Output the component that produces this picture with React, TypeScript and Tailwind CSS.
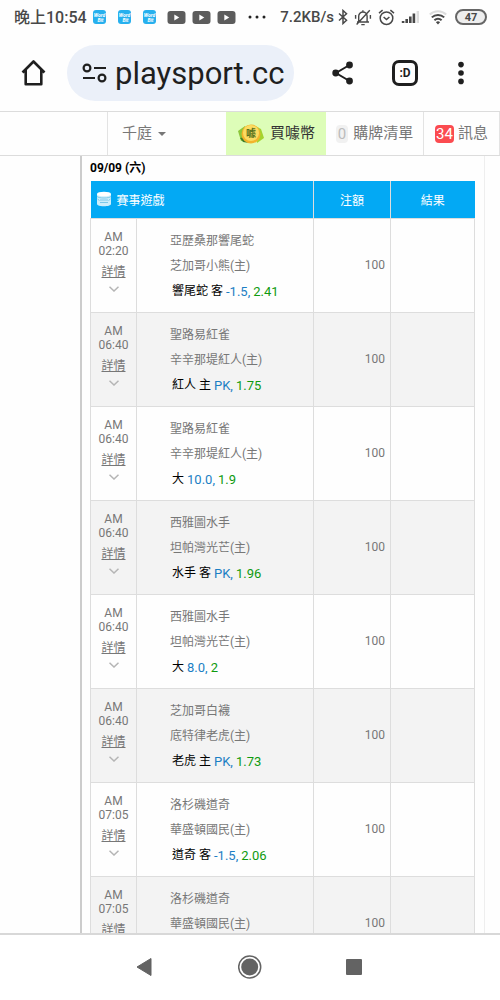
import React from 'react';

type TBet = {
  time: string;
  away: string;
  home: string;
  pick: string;
  line: string;
  odds: string;
  stake: number;
};

const bets: TBet[] = [
  { time: '02:20', away: '亞歷桑那響尾蛇', home: '芝加哥小熊(主)', pick: '響尾蛇 客', line: '-1.5', odds: '2.41', stake: 100 },
  { time: '06:40', away: '聖路易紅雀', home: '辛辛那堤紅人(主)', pick: '紅人 主', line: 'PK', odds: '1.75', stake: 100 },
  { time: '06:40', away: '聖路易紅雀', home: '辛辛那堤紅人(主)', pick: '大', line: '10.0', odds: '1.9', stake: 100 },
  { time: '06:40', away: '西雅圖水手', home: '坦帕灣光芒(主)', pick: '水手 客', line: 'PK', odds: '1.96', stake: 100 },
  { time: '06:40', away: '西雅圖水手', home: '坦帕灣光芒(主)', pick: '大', line: '8.0', odds: '2', stake: 100 },
  { time: '06:40', away: '芝加哥白襪', home: '底特律老虎(主)', pick: '老虎 主', line: 'PK', odds: '1.73', stake: 100 },
  { time: '07:05', away: '洛杉磯道奇', home: '華盛頓國民(主)', pick: '道奇 客', line: '-1.5', odds: '2.06', stake: 100 },
  { time: '07:05', away: '洛杉磯道奇', home: '華盛頓國民(主)', pick: '道奇 客', line: '-1.5', odds: '2.06', stake: 100 },
];

const WordBitIcon: React.FC = () => (
  <svg width="13" height="14" viewBox="0 0 13 14" aria-hidden="true">
    <rect width="13" height="14" rx="3" fill="#27b0ee" />
    <text x="6.5" y="6.5" textAnchor="middle" fontSize="5" fontWeight="700" fontStyle="italic" fill="#fff">
      Word
    </text>
    <text x="7.5" y="11.5" textAnchor="middle" fontSize="5" fontWeight="700" fontStyle="italic" fill="#fff">
      Bit
    </text>
  </svg>
);

const VideoIcon: React.FC = () => (
  <svg width="19" height="13" viewBox="0 0 19 13" aria-hidden="true">
    <rect x="0.5" width="18" height="13" rx="3" fill="#5c5c5c" />
    <path d="M7.3 3.6v5.8l5-2.9z" fill="#fff" />
  </svg>
);

const StatusIcons: React.FC = () => (
  <>
    <svg width="10" height="16" viewBox="0 0 10 16" fill="none" stroke="#484848" strokeWidth="1.5" aria-hidden="true">
      <path d="M1 4.5l7.5 6.8L5 14.5v-13l3.5 3.2L1 11.5" />
    </svg>
    <svg className="ml-[6px]" width="18" height="17" viewBox="0 0 18 17" fill="none" stroke="#484848" strokeWidth="1.4" aria-hidden="true">
      <path d="M3 13h12M4.7 12.5V7.2a4.2 4.2 0 0 1 8.4 0v5.3M7.3 15.6h3.4M8.9 3V1.2M15.8 1.2L2.6 15.4M1.6 6v3.8M16.4 6v3.8" />
    </svg>
    <svg className="ml-[6px]" width="17" height="17" viewBox="0 0 17 17" fill="none" stroke="#484848" strokeWidth="1.5" aria-hidden="true">
      <circle cx="8.5" cy="9.2" r="6.3" />
      <path d="M5.6 8l2.9 2.6L11.4 8M1 4.2l3.6-3M16 4.2l-3.6-3" />
    </svg>
    <svg className="ml-[6px]" width="19" height="14" viewBox="0 0 19 14" aria-hidden="true">
      <path d="M0.8 11h2.6v2H0.8zM4.4 9H7v4H4.4zM8 6.6h2.6V13H8zM11.6 3.6h2.6V13h-2.6z" fill="#484848" />
      <path d="M15.6 1H18v12h-2.4z" fill="#ddd" />
    </svg>
    <svg className="ml-[9px]" width="18" height="15" viewBox="0 0 18 15" fill="none" strokeWidth="2" aria-hidden="true">
      <path d="M0.8 4.6a12 12 0 0 1 16.4 0" stroke="#ddd" />
      <path d="M2.8 7.4a9 9 0 0 1 12.4 0M5.4 10.2a5.4 5.4 0 0 1 7.2 0" stroke="#484848" />
      <path d="M6.9 12.2a3.2 3.2 0 0 1 4.2 0L9 14.6z" fill="#484848" />
    </svg>
  </>
);

const StatusBar: React.FC = () => (
  <div className="flex h-[34px] shrink-0 items-center pr-[13px] pl-[14px] text-[#484848]">
    <span className="pt-[2px] text-base font-medium whitespace-nowrap">晚上10:54</span>
    <div className="ml-[6px] flex gap-3">
      <WordBitIcon />
      <WordBitIcon />
      <WordBitIcon />
    </div>
    <div className="ml-[11px] flex gap-[6px]">
      <VideoIcon />
      <VideoIcon />
      <VideoIcon />
    </div>
    <svg className="ml-3" width="20" height="4" viewBox="0 0 20 4" fill="#222" aria-hidden="true">
      <circle cx="2" cy="2" r="1.5" />
      <circle cx="9" cy="2" r="1.5" />
      <circle cx="16" cy="2" r="1.5" />
    </svg>
    <div className="ml-auto flex items-center">
      <span className="mr-1 text-[15px] font-medium">7.2KB/s</span>
      <StatusIcons />
      <span className="ml-2 flex h-4 w-8 items-center justify-center rounded-full border-2 border-[#666] bg-[#eee] pt-px text-[11px] leading-none font-bold">
        47
      </span>
    </div>
  </div>
);

const BrowserBar: React.FC = () => (
  <header className="flex h-[77px] shrink-0 items-center pr-[13px] pl-[21px]">
    <button type="button" aria-label="首頁">
      <svg width="26" height="28" viewBox="0 0 26 28" fill="none" stroke="#1f1f1f" strokeWidth="2.6" aria-hidden="true">
        <path d="M1.5 13.5L12.5 2.5l11 11M4.7 11v14.2h15.6V11" strokeLinejoin="round" />
      </svg>
    </button>
    <div className="mr-[17px] ml-5 flex h-14 min-w-0 flex-1 items-center rounded-full bg-[#ebf0f9] pr-2 pl-[14px]">
      <svg className="shrink-0" width="28" height="24" viewBox="0 0 28 24" fill="none" stroke="#1f1f1f" strokeWidth="2.2" aria-hidden="true">
        <circle cx="6" cy="7" r="3.4" />
        <circle cx="21" cy="17" r="3.4" />
        <path d="M13 7h12M2 17h12" />
      </svg>
      <input
        className="ml-[6px] w-full min-w-0 bg-transparent pt-[3px] text-[31px] leading-10 text-[#1f1f1f] outline-none"
        aria-label="網址"
        defaultValue="playsport.cc"
      />
    </div>
    <button type="button" aria-label="分享" className="flex w-16 justify-center">
      <svg width="24" height="26" viewBox="0 0 24 26" fill="#1f1f1f" aria-hidden="true">
        <path d="M18.5 5L5 13l13.5 8" fill="none" stroke="#1f1f1f" strokeWidth="2" />
        <circle cx="18.5" cy="5" r="3.4" />
        <circle cx="4.7" cy="13" r="3.4" />
        <circle cx="18.5" cy="21" r="3.4" />
      </svg>
    </button>
    <button type="button" aria-label="分頁" className="flex w-[60px] justify-center">
      <span className="flex h-[26px] w-[26px] items-center justify-center rounded-[7px] border-[3px] border-[#1f1f1f] text-xs leading-none font-bold text-[#1f1f1f]">
        :D
      </span>
    </button>
    <button type="button" aria-label="更多" className="flex w-[52px] justify-center">
      <svg width="8" height="24" viewBox="0 0 8 24" fill="#1f1f1f" aria-hidden="true">
        <circle cx="4" cy="3.6" r="2.8" />
        <circle cx="4" cy="12" r="2.8" />
        <circle cx="4" cy="20.4" r="2.8" />
      </svg>
    </button>
  </header>
);

const CoinIcon: React.FC = () => (
  <svg width="28" height="22" viewBox="0 0 28 22" aria-hidden="true">
    <path d="M1 8l7-5 3 14-7 1z" fill="#8cc63a" />
    <path d="M18 3l6 3 3 9-7 5z" fill="#a4d42f" />
    <path d="M3 15l6-1 3 6-6-1z" fill="#3f7d2a" />
    <ellipse cx="14" cy="11" rx="9.5" ry="9.5" fill="#f2b42c" />
    <ellipse cx="14" cy="10" rx="8" ry="8" fill="#fbdc62" />
    <text x="14" y="14" textAnchor="middle" fontSize="10" fontWeight="700" fill="#55701c">
      噱
    </text>
  </svg>
);

const SiteNav: React.FC = () => (
  <nav className="flex h-[45px] shrink-0 justify-end border-y border-[#dcdcdc] text-[15px] text-[#777]">
    <button type="button" className="flex w-[119px] items-center border-l border-[#e3e3e3] pl-[14px]">
      千庭
      <span className="ml-[6px] border-x-4 border-t-4 border-x-transparent border-t-[#777]" />
    </button>
    <a href="#coins" className="flex w-[100px] items-center justify-center gap-[5px] bg-[#ddfdb8] text-[#333]">
      <CoinIcon />
      買噱幣
    </a>
    <a href="#orders" className="flex w-[97px] items-center justify-center gap-[5px]">
      <span className="rounded-sm bg-[#f1f1f1] px-[2px] leading-[18px] text-[#bbb]">0</span>
      購牌清單
    </a>
    <a href="#messages" className="flex w-[77px] items-center justify-center gap-1 border-x border-[#e3e3e3]">
      <span className="rounded-sm bg-[#fb4b50] px-[1px] leading-[18px] text-white">34</span>
      訊息
    </a>
  </nav>
);

const BetRow: React.FC<{ bet: TBet }> = ({ bet }) => (
  <tr className="h-[94px] even:bg-[#f3f3f3]">
    <td className="border border-[#ddd] pb-2 text-center leading-[14px]">
      AM
      <br />
      {bet.time}
      <a href="#detail" className="mt-[5px] block leading-[18px] underline">
        詳情
      </a>
      <svg className="mx-auto mt-[5px]" width="10" height="6" viewBox="0 0 10 6" fill="none" stroke="#b5b5b5" strokeWidth="1.5" aria-hidden="true">
        <path d="M0.5 0.8L5 5l4.5-4.2" />
      </svg>
    </td>
    <td className="border border-[#ddd] pt-[2px] pl-[33px] leading-[25px]">
      <p>{bet.away}</p>
      <p>{bet.home}</p>
      <p className="flex gap-[3px] pl-[2px] text-black">
        {bet.pick}
        <span className="text-[13px] text-[#1c7fc4]">{bet.line},</span>
        <span className="text-[13px] text-[#0f9a0f]">{bet.odds}</span>
      </p>
    </td>
    <td className="border border-[#ddd] pr-[5px] text-right">{bet.stake}</td>
    <td className="border border-[#ddd]" />
  </tr>
);

const BetTable: React.FC = () => (
  <table className="w-full table-fixed border-collapse text-xs text-[#777]">
    <colgroup>
      <col className="w-[46px]" />
      <col />
      <col className="w-[77px]" />
      <col className="w-[84px]" />
    </colgroup>
    <thead className="bg-[#03a9f4] text-white">
      <tr className="h-[37px]">
        <th colSpan={2} className="border-r border-[#ddd] pl-[5px] text-left font-normal">
          <span className="flex items-center gap-[5px]">
            <svg width="16" height="16" viewBox="0 0 16 16" aria-hidden="true">
              <path d="M1 3v10c0 3 14 3 14 0V3z" fill="#cdeefb" />
              <ellipse cx="8" cy="3" rx="7" ry="2.3" fill="#fff" />
              <path d="M1 5.5c2 2 12 2 14 0M4 9h8M4 11.5h8M1.5 8l2 1.5M14.5 8l-2 1.5" fill="none" stroke="#7cc9ea" />
            </svg>
            <span className="pt-[3px]">賽事遊戲</span>
          </span>
        </th>
        <th className="border-r border-[#ddd] pt-[3px] font-normal">注額</th>
        <th className="pt-[3px] font-normal">結果</th>
      </tr>
    </thead>
    <tbody>
      {bets.map((bet, i) => (
        <BetRow key={i} bet={bet} />
      ))}
    </tbody>
  </table>
);

const SystemNav: React.FC = () => (
  <footer className="flex h-[67px] shrink-0 items-center justify-center gap-20 border-t-2 border-[#d8d8d8] bg-white pb-[2px]">
    <button type="button" aria-label="返回">
      <svg width="24" height="26" viewBox="0 0 24 26" fill="#636363" aria-hidden="true">
        <path d="M3 13l14-8.5v17z" stroke="#636363" strokeLinejoin="round" />
      </svg>
    </button>
    <button type="button" aria-label="主畫面">
      <svg width="24" height="26" viewBox="0 0 24 26" fill="#636363" aria-hidden="true">
        <circle cx="11.7" cy="13" r="11" fill="none" stroke="#636363" strokeWidth="1.5" />
        <circle cx="11.7" cy="13" r="8.5" />
      </svg>
    </button>
    <button type="button" aria-label="最近使用" className="flex w-6 justify-center">
      <span className="size-4 rounded-[1px] bg-[#636363]" />
    </button>
  </footer>
);

const App: React.FC = () => (
  <div className="flex h-screen flex-col overflow-hidden bg-[#fefefe] font-[Roboto,'Noto_Sans_CJK_TC',sans-serif]">
    <StatusBar />
    <BrowserBar />
    <SiteNav />
    <main className="mr-[15px] ml-20 min-h-0 flex-1 overflow-hidden border-r border-l-2 border-r-[#eee] border-l-[#ccc] pr-[9px] pl-2">
      <h1 className="pt-[3px] pb-1 text-xs leading-[18px] font-bold text-black">09/09 (六)</h1>
      <BetTable />
    </main>
    <SystemNav />
  </div>
);

export default App;
